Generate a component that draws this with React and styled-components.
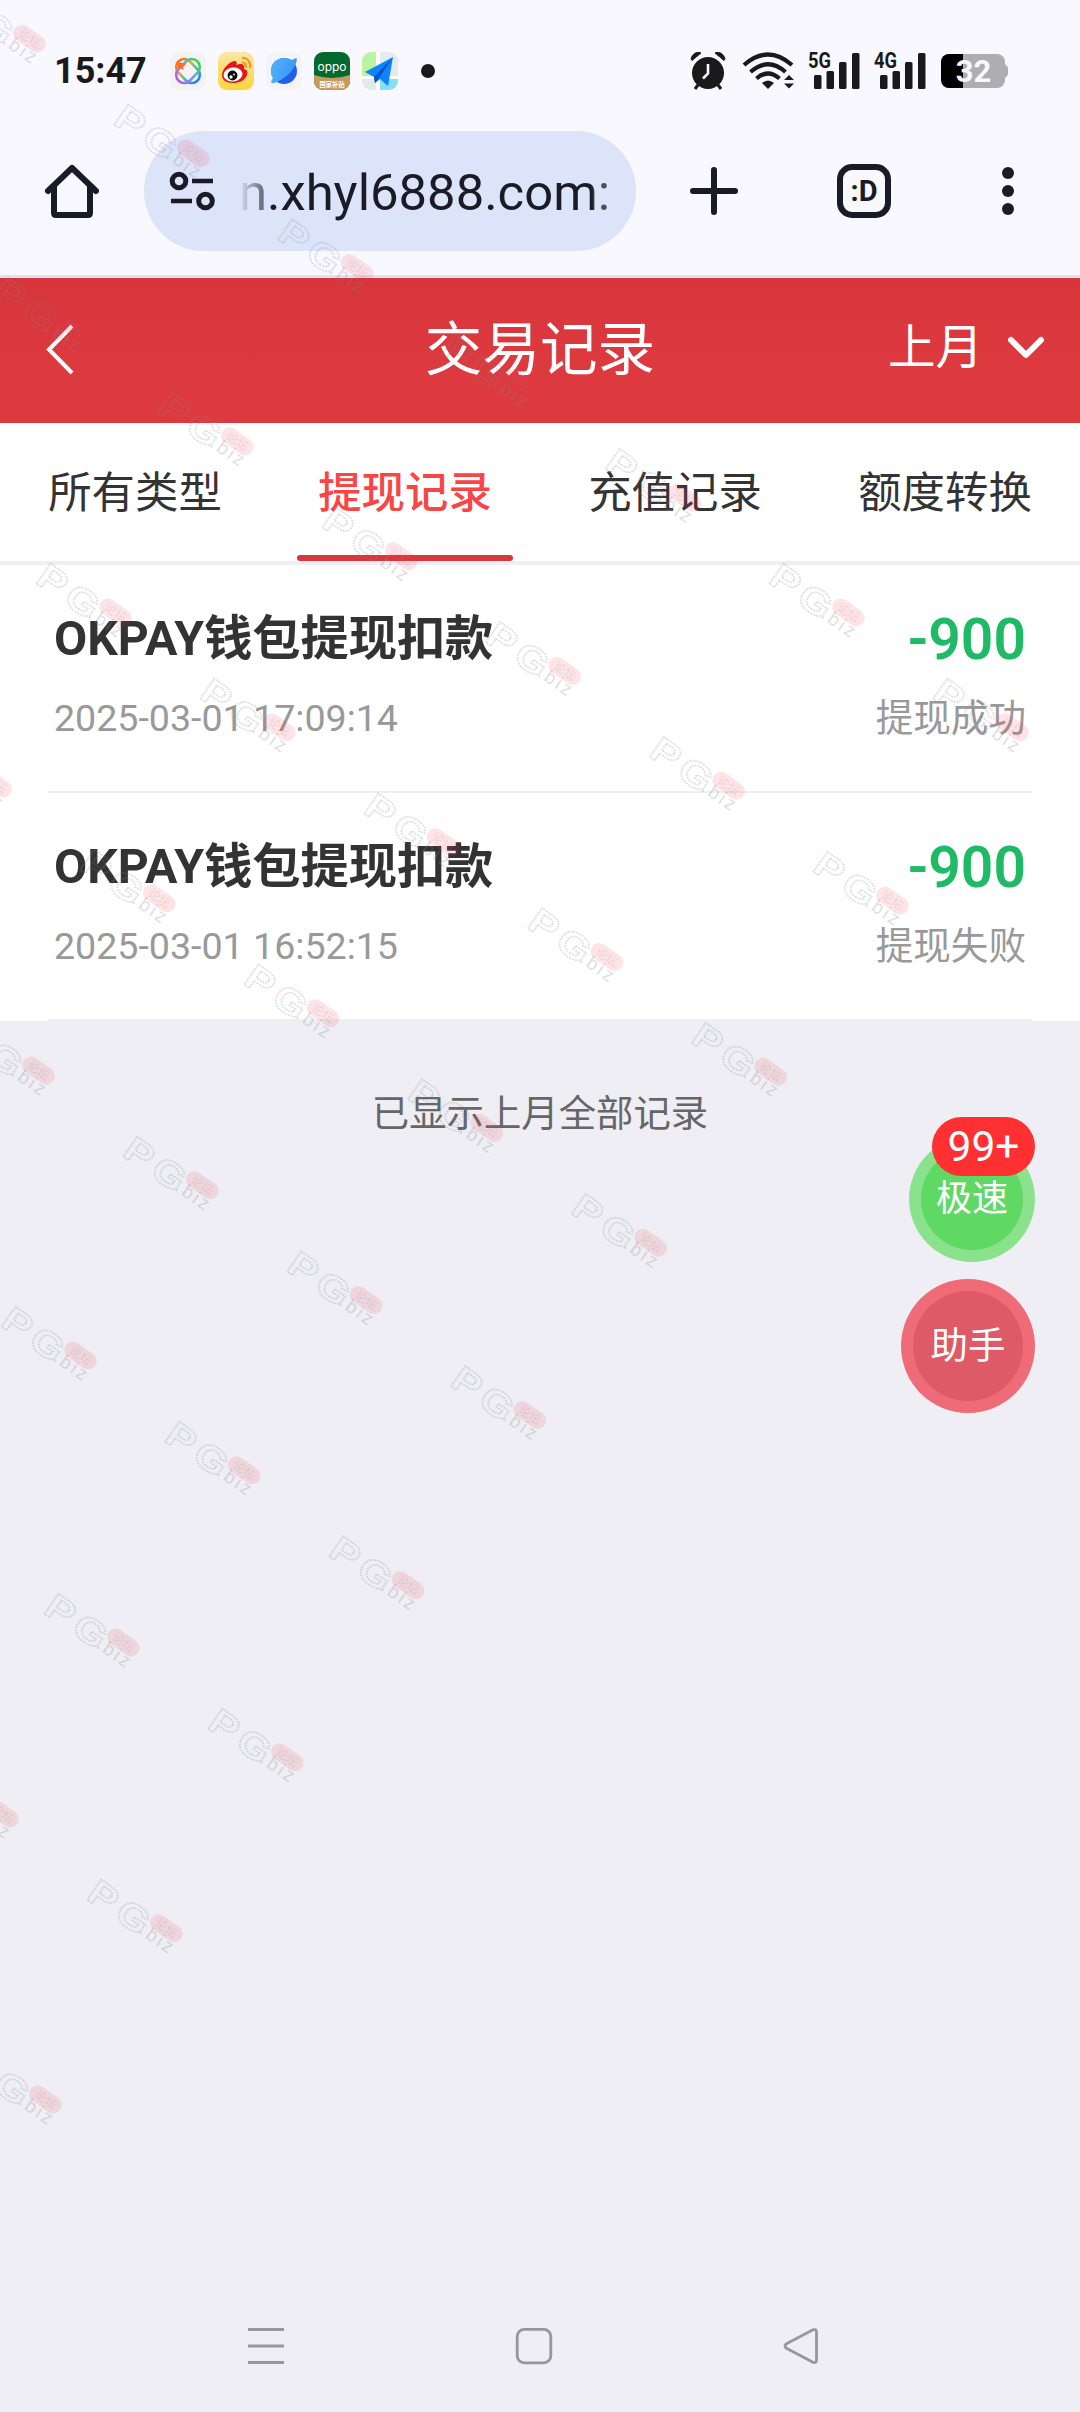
import React from 'react';
import styled, { createGlobalStyle } from 'styled-components';

const GlobalStyle = createGlobalStyle`
    * {
        box-sizing: border-box;
    }
    body {
        margin: 0;
        background: #eeeef4;
        font-family: Roboto, "Noto Sans CJK SC", sans-serif;
    }
    svg {
        display: block;
        flex-shrink: 0;
        overflow: visible;
    }
`;

const Page = styled.div`
    position: relative;
    display: flex;
    flex-direction: column;
    width: 1080px;
    height: 2412px;
    overflow: hidden;
    background: #eeeef4;
`;

/* ---- status bar ---- */

const StatusBar = styled.div`
    display: flex;
    align-items: center;
    justify-content: space-between;
    height: 110px;
    padding: 31px 72px 0 54px;
    background: #f9f8ff;
`;

const StatusGroup = styled.div`
    display: flex;
    align-items: center;
`;

const Clock = styled.span`
    width: 116px;
    font-size: 36px;
    font-weight: 700;
    line-height: 40px;
    color: #1a1a1a;
    white-space: nowrap;
`;

const AppIcons = styled.div`
    display: flex;
    gap: 12px;
`;

const Dot = styled.span`
    width: 14px;
    height: 14px;
    margin-left: 23px;
    border-radius: 50%;
    background: #1a1a1a;
`;

const Signal = styled.svg`
    margin-left: ${(props) => props.$gap}px;
`;

/* ---- browser bar ---- */

const BrowserBar = styled.div`
    display: flex;
    align-items: center;
    height: 168px;
    padding: 0 64px 3px 43px;
    background: #f9f8ff;
    border-bottom: 3px solid #dfe2f1;
`;

const AddressPill = styled.div`
    display: flex;
    align-items: center;
    width: 492px;
    height: 120px;
    margin: 0 51px 0 43px;
    padding-left: 24px;
    border-radius: 60px;
    background: #dce4f9;
`;

const Url = styled.span`
    margin-left: 23px;
    padding-top: 3px;
    font-size: 50.8px;
    line-height: 60px;
    color: #1a1b26;
    white-space: nowrap;
    -webkit-mask-image: linear-gradient(90deg, transparent 0, rgba(0, 0, 0, 0.6) 24px, #000 32px, #000 352px, rgba(0, 0, 0, 0.75) 358px);
    mask-image: linear-gradient(90deg, transparent 0, rgba(0, 0, 0, 0.6) 24px, #000 32px, #000 352px, rgba(0, 0, 0, 0.75) 358px);
`;

const TabCount = styled.div`
    display: flex;
    align-items: center;
    justify-content: center;
    width: 54px;
    height: 54px;
    margin: 0 111px 0 96px;
    border: 6px solid #1a1b26;
    border-radius: 15px;
    font-size: 29px;
    font-weight: 700;
    line-height: 42px;
    color: #1a1b26;
`;

/* ---- page header ---- */

const Header = styled.header`
    display: grid;
    grid-template-columns: 1fr auto 1fr;
    align-items: center;
    height: 145px;
    padding: 0 36px;
    background: linear-gradient(180deg, #d6353a 0%, #dd3a40 60%, #dd3a40 100%);
    color: #fff;
`;

const BackArrow = styled.svg`
    margin: 0 0 4px 10px;
`;

const Title = styled.h1`
    margin: 0;
    font-size: 57.6px;
    font-weight: 400;
    line-height: 84px;
`;

const MonthPicker = styled.div`
    display: flex;
    align-items: center;
    justify-content: flex-end;
    gap: 25px;
    padding-bottom: 5px;
    font-size: 47.5px;
    line-height: 68px;
`;

/* ---- tabs ---- */

const Tabs = styled.nav`
    display: grid;
    grid-template-columns: repeat(4, 1fr);
    height: 142px;
    background: #fff;
    border-bottom: 4px solid #eeeef4;
`;

const Tab = styled.div`
    display: flex;
    flex-direction: column;
    align-items: center;
    justify-content: space-between;
    padding-top: 39px;
    font-size: 43.4px;
    font-weight: ${(props) => (props.$active ? 500 : 400)};
    line-height: 64px;
    color: ${(props) => (props.$active ? '#f84646' : '#333')};

    &::after {
        content: '';
        width: 216px;
        height: 6px;
        border-radius: 3px;
        background: ${(props) => (props.$active ? '#d8383d' : 'transparent')};
    }
`;

/* ---- records ---- */

const List = styled.div`
    padding: 0 48px;
    background: #fff;
`;

const Record = styled.div`
    display: grid;
    grid-template-columns: 1fr auto;
    align-content: start;
    height: 228px;
    padding: 39px 6px 0 6px;
    border-bottom: 2px solid #eeeff1;
`;

const Name = styled.div`
    font-size: 48.2px;
    font-weight: 700;
    line-height: 70px;
    color: #333;
`;

const Amount = styled.div`
    font-size: 57px;
    font-weight: 600;
    line-height: 72px;
    text-align: right;
    color: #1fba66;
`;

const Meta = styled.div`
    margin-top: 15px;
    font-size: 37.6px;
    line-height: 54px;
    color: #999;
`;

const EndNote = styled.p`
    flex: 1;
    margin: 0;
    padding-top: 65px;
    font-size: 37.4px;
    line-height: 56px;
    text-align: center;
    color: #666;
`;

/* ---- floating buttons ---- */

const FloatStack = styled.div`
    position: absolute;
    top: 1136px;
    right: 45px;
    display: flex;
    flex-direction: column;
    align-items: flex-end;
    gap: 17px;
`;

const FloatButton = styled.div`
    position: relative;
    display: flex;
    align-items: center;
    justify-content: center;
    width: ${(props) => props.$size}px;
    height: ${(props) => props.$size}px;
    border-radius: 50%;
    background: radial-gradient(
        closest-side,
        ${(props) => props.$fill} calc(100% - 12.5px),
        ${(props) => props.$ring} calc(100% - 11.5px)
    );
    font-size: ${(props) => props.$font}px;
    line-height: 54px;
    color: #fff;
`;

const Badge = styled.span`
    position: absolute;
    top: -19px;
    right: 0;
    width: 103px;
    height: 59px;
    border-radius: 30px;
    background: #fe3032;
    font-size: 42.5px;
    line-height: 59px;
    text-align: center;
`;

/* ---- system navigation ---- */

const NavBar = styled.div`
    display: flex;
    align-items: center;
    justify-content: space-between;
    height: 132px;
    padding: 0 260px 0 247px;
`;

const Watermarks = styled.svg`
    position: absolute;
    top: 0;
    left: 0;
    pointer-events: none;
`;

const records = [
    { id: 1, name: 'OKPAY钱包提现扣款', time: '2025-03-01 17:09:14', amount: '-900', status: '提现成功' },
    { id: 2, name: 'OKPAY钱包提现扣款', time: '2025-03-01 16:52:15', amount: '-900', status: '提现失败' },
];

const tabs = ['所有类型', '提现记录', '充值记录', '额度转换'];

// start point and number of marks on each diagonal
const markRows = [
    [-50, -11, 7],
    [-6, 277, 6],
    [36, 563, 5],
    [-84, 734, 5],
    [-41, 1021, 4],
    [1, 1306, 3],
    [44, 1593, 2],
    [-77, 1764, 2],
    [-34, 2050, 1],
];

const marks = markRows.flatMap(([x, y, count]) =>
    Array.from({ length: count }, (_, i) => [x + i * 163.8, y + i * 114.8])
);

const Mark = ({ x, y }) => (
    <g transform={`translate(${x} ${y})`}>
        <g
            transform="translate(-1 20) rotate(35) scale(1.18 1)"
            fontFamily="Liberation Sans"
            fontWeight="700"
            fontSize="36"
            fill="none"
            stroke="#85858f"
            strokeOpacity="0.27"
            strokeWidth="1.7"
            strokeDasharray="1.7 0.9"
        >
            <text x="-1">P</text>
            <text x="28">G</text>
        </g>
        <g transform="translate(51 54) rotate(35)">
            <text fontFamily="Liberation Sans" fontSize="19" letterSpacing="2.500" fill="#858590" fillOpacity="0.27">
                .biz
            </text>
        </g>
        <g transform="translate(79.5 49.500) rotate(35)">
            <rect x="-18" y="-8.500" width="36" height="17" rx="8.500" fill="#f8303c" fillOpacity="0.13" />
            <text
                y="4.500"
                textAnchor="middle"
                fontFamily="Noto Sans CJK SC"
                fontSize="12"
                fill="#8c8c94"
                fillOpacity="0.2"
            >
                论坛
            </text>
        </g>
    </g>
);

const AiIcon = () => (
    <svg width="36" height="38" viewBox="0 0 36 38">
        <defs>
            <linearGradient id="aiRing" x1="0" y1="0" x2="1" y2="0">
                <stop offset="0" stopColor="#ff6a2b" />
                <stop offset="0.35" stopColor="#f6a13a" />
                <stop offset="0.6" stopColor="#45c9a0" />
                <stop offset="1" stopColor="#2c7df5" />
            </linearGradient>
            <linearGradient id="aiRing2" x1="1" y1="0" x2="0" y2="0">
                <stop offset="0" stopColor="#3fd34f" />
                <stop offset="0.5" stopColor="#6aa5f0" />
                <stop offset="1" stopColor="#b45cf0" />
            </linearGradient>
        </defs>
        <rect width="36" height="38" rx="9" fill="#f3f3f4" />
        <g fill="none" strokeWidth="2.600">
            <rect x="4.500" y="11" width="27" height="16" rx="8" transform="rotate(46 18 19)" stroke="url(#aiRing)" />
            <rect x="4.500" y="11" width="27" height="16" rx="8" transform="rotate(-46 18 19)" stroke="url(#aiRing2)" />
        </g>
        <path d="M8 10l8 2-3 3 1 3-4-2-3 1 1-3z" fill="#ff6b26" />
    </svg>
);

const WeiboIcon = () => (
    <svg width="36" height="38" viewBox="0 0 36 38">
        <defs>
            <linearGradient id="weiboBg" x1="0" y1="0" x2="0" y2="1">
                <stop offset="0" stopColor="#fae6a8" />
                <stop offset="1" stopColor="#ffd53a" />
            </linearGradient>
        </defs>
        <rect width="36" height="38" rx="9" fill="url(#weiboBg)" />
        <path
            d="M4 23C4 17 11 10 16 9c3 0 3 2 2.500 4 4-2 9-1 7.500 4 4 1 4 4 2.500 7C26 29 21 31 15 31 8 31 4 28 4 23z"
            fill="#e6161c"
        />
        <ellipse cx="15" cy="22.500" rx="9.500" ry="7" transform="rotate(-8 15 22.500)" fill="#fff" />
        <circle cx="14.500" cy="23.500" r="4.900" fill="#0a0a0a" />
        <circle cx="13" cy="25" r="1.700" fill="#fff" />
        <circle cx="16" cy="22.500" r="0.900" fill="#fff" />
        <path d="M24 6c5-1 9 4 8 10M23.500 10.500c3-.5 5 2 4.500 5" fill="none" stroke="#f39a1d" strokeWidth="2.200" />
    </svg>
);

const PlanetIcon = () => (
    <svg width="36" height="38" viewBox="0 0 36 38">
        <defs>
            <linearGradient id="planet" x1="0" y1="0" x2="1" y2="0.4">
                <stop offset="0" stopColor="#52b6fb" />
                <stop offset="1" stopColor="#3a97f5" />
            </linearGradient>
        </defs>
        <rect width="36" height="38" rx="9" fill="#f3f4f7" />
        <circle cx="18" cy="19" r="13" fill="#2260e8" />
        <path d="M5 22C4 14 10 6 18 6c4 0 6 1 8 2 5-3 6-2 4 3C27 20 17 28 8 31c-4 1-3-2-1-5z" fill="url(#planet)" />
    </svg>
);

const OppoIcon = () => (
    <svg width="36" height="38" viewBox="0 0 36 38">
        <defs>
            <clipPath id="oppoClip">
                <rect width="36" height="38" rx="9" />
            </clipPath>
        </defs>
        <g clipPath="url(#oppoClip)">
            <rect width="36" height="38" fill="#04692f" />
            <path d="M0 23q18 6 36 0v15H0z" fill="#c69a5d" />
        </g>
        <text x="18" y="19" textAnchor="middle" fontFamily="Inter" fontSize="11" textLength="29" lengthAdjust="spacingAndGlyphs" fill="#fff">
            oppo
        </text>
        <text x="18" y="34.500" textAnchor="middle" fontFamily="Noto Sans CJK SC" fontWeight="700" fontSize="6.300" fill="#fff">
            国家补贴
        </text>
    </svg>
);

const MapIcon = () => (
    <svg width="36" height="38" viewBox="0 0 36 38">
        <defs>
            <clipPath id="mapClip">
                <rect width="36" height="38" rx="9" />
            </clipPath>
        </defs>
        <g clipPath="url(#mapClip)">
            <rect width="36" height="38" fill="#fff" />
            <path d="M0 0h14v24H0z" fill="#bdf2a0" />
            <path d="M18 0h18v24H18z" fill="#e3ebee" />
            <path d="M0 27h14v11H0z" fill="#e1ecea" />
            <path d="M18 27h18v11H18z" fill="#86ddff" />
        </g>
        <path d="M31 5L3 20l9 5 1 6 5-4 8 7z" fill="#0b86ff" />
        <path d="M31 5L12 25l1 6 4-5z" fill="#0553c9" />
    </svg>
);

const bars = [
    [6, 23, 14],
    [18.500, 19, 18],
    [31, 10, 27],
    [44, 1, 36],
];

const Cellular = ({ label, gap }) => (
    <Signal $gap={gap} width="52" height="38" viewBox="0 0 52 38">
        {bars.map(([x, y, h]) => (
            <rect key={x} x={x} y={y} width="7.500" height={h} rx="1.500" fill="#1a1a1a" />
        ))}
        <text x="0" y="15.500" fontFamily="Roboto" fontWeight="700" fontSize="21.500" textLength="23" lengthAdjust="spacingAndGlyphs" fill="#1a1a1a">
            {label}
        </text>
    </Signal>
);

const AlarmIcon = () => (
    <svg width="38" height="40" viewBox="0 0 38 40">
        <circle cx="19" cy="22" r="16" fill="#1a1a1a" />
        <path d="M2 8C3 3 8 0 12 2L3 9.500zM36 8C35 3 30 0 26 2l9 7.500z" fill="#1a1a1a" stroke="#1a1a1a" strokeLinejoin="round" />
        <path d="M9 34l-3 4M29 34l3 4" stroke="#1a1a1a" strokeWidth="3" />
        <path d="M19 13v9.500l-5 5" fill="none" stroke="#f9f8ff" strokeWidth="2.600" />
    </svg>
);

const WifiIcon = () => (
    <Signal $gap={16} width="52" height="38" viewBox="0 0 52 38">
        <g fill="none" stroke="#1a1a1a" strokeWidth="4.200">
            <path d="M1 13q24-21 48 0" />
            <path d="M7.500 20q17.500-15.500 35 0" />
            <path d="M13.500 26.500q11.500-10 23 0" />
        </g>
        <path d="M19 31q6-5 12 0l-6 6z" fill="#1a1a1a" />
        <path d="M41 28l5-5 5 5zM41 31.500l5 5 5-5z" fill="#1a1a1a" />
    </Signal>
);

const BatteryIcon = () => (
    <Signal $gap={15} width="67" height="36" viewBox="0 0 67 36">
        <defs>
            <clipPath id="battery">
                <rect y="1" width="64" height="34" rx="8" />
            </clipPath>
        </defs>
        <g clipPath="url(#battery)">
            <rect width="64" height="36" fill="#aeadb2" />
            <rect width="22" height="36" fill="#000" />
        </g>
        <path d="M63 11q4 1 4 5v4q0 4-4 5z" fill="#aeadb2" />
        <text x="32.500" y="29" textAnchor="middle" fontFamily="Roboto" fontWeight="700" fontSize="31" fill="#f9f8ff">
            32
        </text>
    </Signal>
);

const App = () => {
    return (
        <>
            <GlobalStyle />
            <Page>
                <StatusBar>
                    <StatusGroup>
                        <Clock>15:47</Clock>
                        <AppIcons>
                            <AiIcon />
                            <WeiboIcon />
                            <PlanetIcon />
                            <OppoIcon />
                            <MapIcon />
                        </AppIcons>
                        <Dot />
                    </StatusGroup>
                    <StatusGroup>
                        <AlarmIcon />
                        <WifiIcon />
                        <Cellular label="5G" gap={13} />
                        <Cellular label="4G" gap={14} />
                        <BatteryIcon />
                    </StatusGroup>
                </StatusBar>

                <BrowserBar>
                    <svg width="58" height="58" viewBox="0 0 58 58" fill="none" stroke="#1a1b26" strokeWidth="6" strokeLinecap="round" strokeLinejoin="round">
                        <path d="M5 29L29 6l24 23" />
                        <path d="M11 25v26q0 2 2 2h32q2 0 2-2V25" />
                    </svg>
                    <AddressPill>
                        <svg width="48" height="40" viewBox="0 0 48 40" fill="none" stroke="#1a1b26" strokeWidth="5">
                            <circle cx="11" cy="10" r="6.800" />
                            <path d="M24 10h21M3 30h21" strokeWidth="4.600" />
                            <circle cx="37.500" cy="30" r="6.800" />
                        </svg>
                        <Url>n.xhyl6888.com:</Url>
                    </AddressPill>
                    <svg width="54" height="54" viewBox="0 0 54 54" stroke="#1a1b26" strokeWidth="6" strokeLinecap="round">
                        <path d="M27 6v42M6 27h42" />
                    </svg>
                    <TabCount>:D</TabCount>
                    <svg width="12" height="50" viewBox="0 0 12 50" fill="#1a1b26">
                        <circle cx="6" cy="7" r="6" />
                        <circle cx="6" cy="25" r="6" />
                        <circle cx="6" cy="43" r="6" />
                    </svg>
                </BrowserBar>

                <Header>
                    <BackArrow width="30" height="52" viewBox="0 0 30 52" fill="none" stroke="#fff" strokeWidth="4">
                        <path d="M26 3L3 26.500 26 50" />
                    </BackArrow>
                    <Title>交易记录</Title>
                    <MonthPicker>
                        上月
                        <svg width="36" height="24" viewBox="0 0 36 24" fill="none" stroke="#fff" strokeWidth="6" strokeLinecap="round" strokeLinejoin="round">
                            <path d="M3 4l15 15L33 4" />
                        </svg>
                    </MonthPicker>
                </Header>

                <Tabs>
                    {tabs.map((tab) => (
                        <Tab key={tab} $active={tab === '提现记录'}>
                            {tab}
                        </Tab>
                    ))}
                </Tabs>

                <List>
                    {records.map((record) => (
                        <Record key={record.id}>
                            <Name>{record.name}</Name>
                            <Amount>{record.amount}</Amount>
                            <Meta>{record.time}</Meta>
                            <Meta>{record.status}</Meta>
                        </Record>
                    ))}
                </List>

                <EndNote>已显示上月全部记录</EndNote>

                <NavBar>
                    <svg width="38" height="38" viewBox="0 0 38 38" stroke="#97969b" strokeWidth="3">
                        <path d="M1 2.500h36M1 19h36M1 35.500h36" />
                    </svg>
                    <svg width="38" height="38" viewBox="0 0 38 38" fill="none" stroke="#97969b" strokeWidth="2.800">
                        <rect x="2.200" y="2.400" width="33.600" height="33.400" rx="7" />
                    </svg>
                    <svg width="38" height="38" viewBox="0 0 38 38" fill="none" stroke="#97969b" strokeWidth="2.800" strokeLinejoin="round">
                        <path d="M31 2.800L4 17q-2 2 0 4L31 35.300q3.500 1 3.500-2V4.800q0-3-3.500-2z" />
                    </svg>
                </NavBar>

                <FloatStack>
                    <FloatButton $size={126} $ring="#8be28d" $fill="#5fd963" $font={36}>
                        极速
                        <Badge>99+</Badge>
                    </FloatButton>
                    <FloatButton $size={134} $ring="#ef6b77" $fill="#de5a66" $font={37.44}>
                        助手
                    </FloatButton>
                </FloatStack>

                <Watermarks width="1080" height="2412" viewBox="0 0 1080 2412">
                    {marks.map(([x, y]) => (
                        <Mark key={`${x}-${y}`} x={x} y={y} />
                    ))}
                </Watermarks>
            </Page>
        </>
    );
};

export default App;
